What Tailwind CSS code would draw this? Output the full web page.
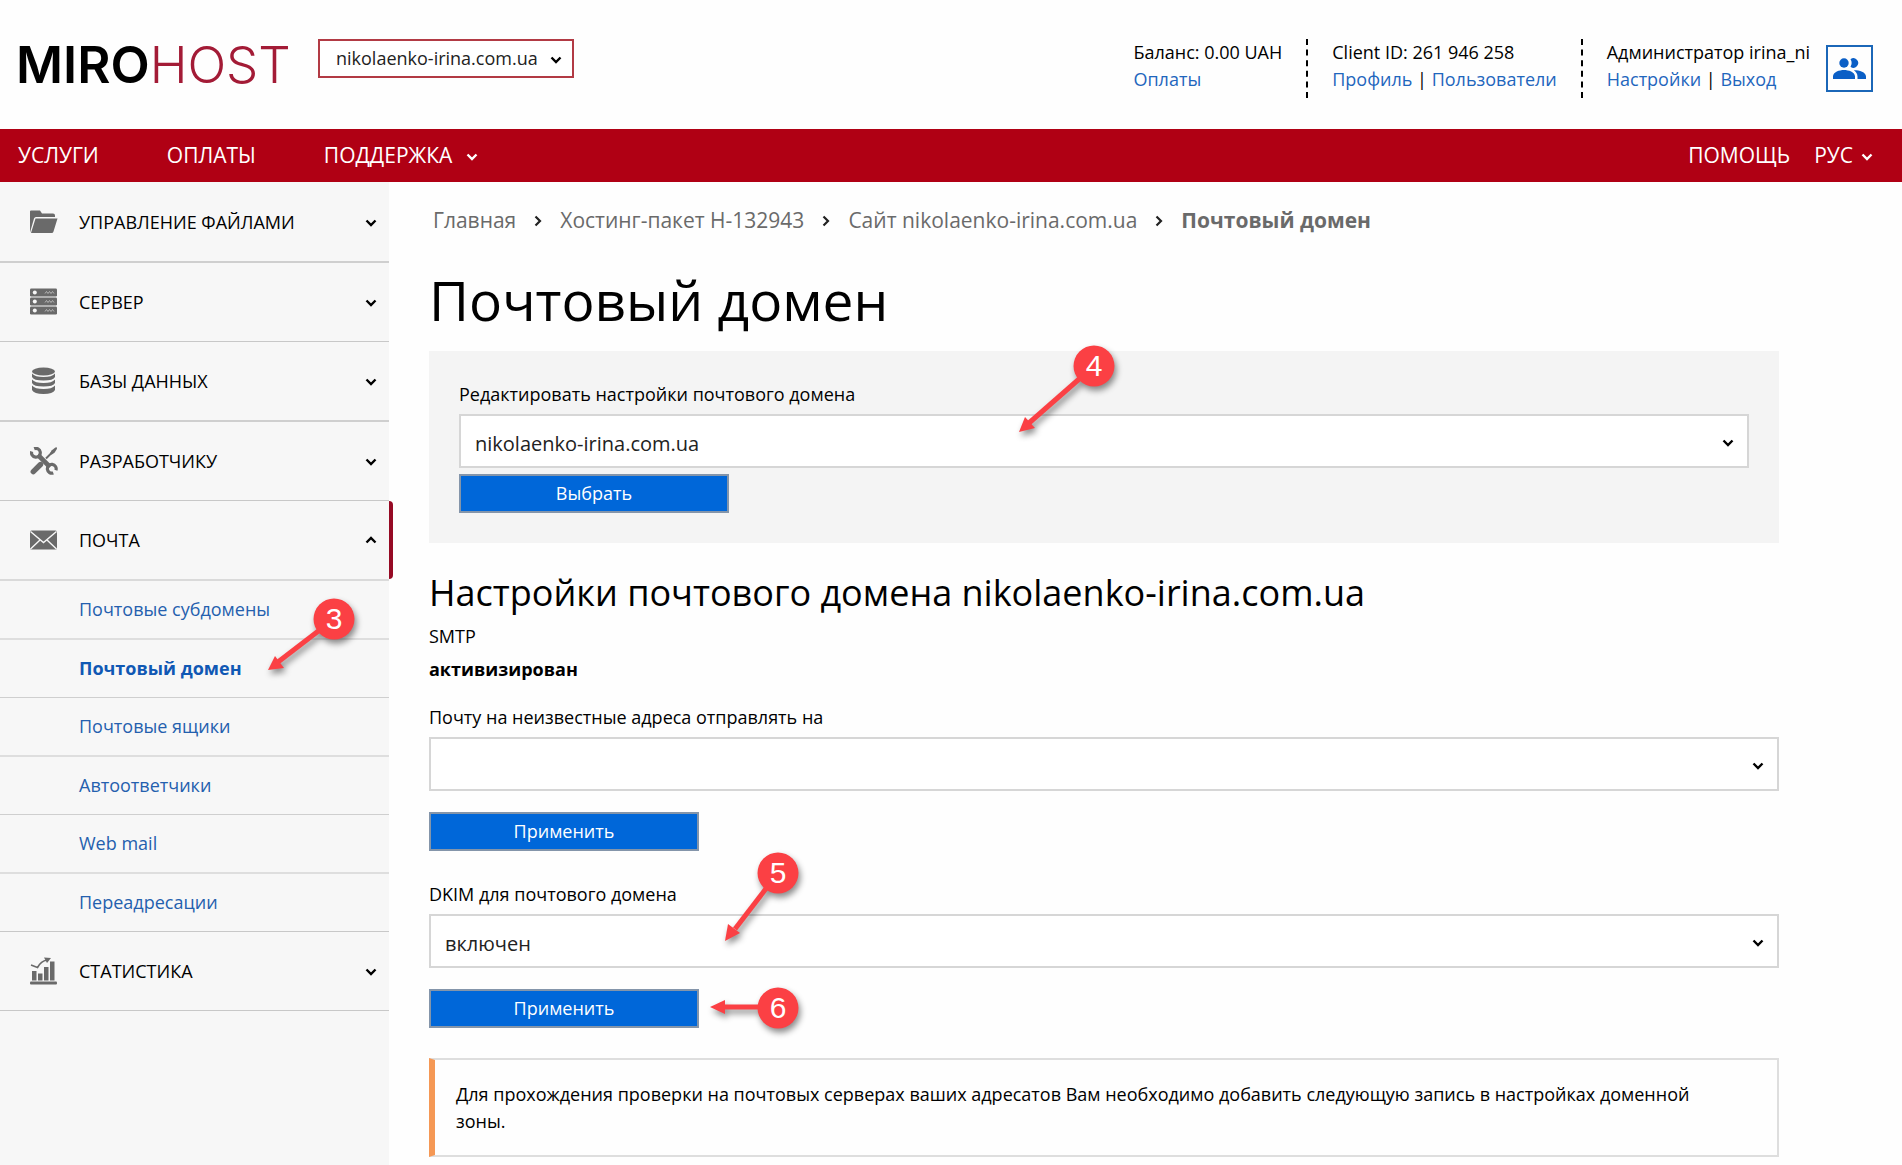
<!DOCTYPE html>
<html lang="ru">
<head>
<meta charset="utf-8">
<meta name="viewport" content="width=device-width, initial-scale=1">
<title>Почтовый домен</title>
<script src="https://cdn.jsdelivr.net/npm/@tailwindcss/browser@4"></script>
</head>
<body class="relative flex min-h-screen flex-col bg-[#fefefe] font-['Open_Sans',sans-serif] text-[18px] leading-[27px] text-black">

<svg class="hidden" aria-hidden="true">
  <symbol id="down" viewBox="0 0 12 8"><path d="M1.5 1.5 6 6l4.5-4.5" fill="none" stroke="currentColor" stroke-width="2.4"/></symbol>
  <symbol id="right" viewBox="0 0 8 12"><path d="M1.5 1.5 6 6l-4.5 4.5" fill="none" stroke="currentColor" stroke-width="2.2"/></symbol>
</svg>

<header class="flex h-[129px] shrink-0 items-start pt-[39px] pr-[29px] pl-4">
  <a href="#" class="w-[302px] shrink-0 font-['Inter',sans-serif] text-[51px] leading-[52px] whitespace-nowrap"><span class="font-semibold">MIRO</span><span class="font-light text-[#a31b36]">HOST</span></a>
  <div class="grid w-[256px]">
    <select aria-label="Сайт" class="col-start-1 row-start-1 h-[39px] w-full appearance-none border-2 border-[#b23a44] bg-white pl-4 text-[#222]"><option>nikolaenko-irina.com.ua</option></select>
    <svg class="pointer-events-none col-start-1 row-start-1 mt-0.5 mr-3 h-2 w-3 self-center justify-self-end"><use href="#down"/></svg>
  </div>
  <div class="ml-auto flex shrink-0">
    <div class="h-[59px] border-r-2 border-dashed border-black pr-6">
      <p>Баланс: 0.00 UAH</p>
      <p><a href="#" class="text-[#1f66bd]">Оплаты</a></p>
    </div>
    <div class="h-[59px] border-r-2 border-dashed border-black px-6">
      <p>Client ID: 261 946 258</p>
      <p><a href="#" class="text-[#1f66bd]">Профиль</a> | <a href="#" class="text-[#1f66bd]">Пользователи</a></p>
    </div>
    <div class="h-[59px] pr-4 pl-6">
      <p>Администратор irina_ni</p>
      <p><a href="#" class="text-[#1f66bd]">Настройки</a> | <a href="#" class="text-[#1f66bd]">Выход</a></p>
    </div>
    <button type="button" aria-label="Пользователи" class="mt-1.5 flex size-[47px] items-center justify-center border-2 border-[#1b67b8]">
      <svg class="w-[33px]" viewBox="0 0 33 22" fill="#0b5fc6"><circle cx="11" cy="5" r="4.7"/><path d="M17.5 1.3a4.7 4.7 0 1 1 0 7.4 7 7 0 0 0 0-7.4zM0 21v-2.500C0 14 6.5 12 11 12s11 2 11 6.500V21zM24.5 21v-2.500c0-2.700-1.500-4.700-3.700-6.200C26 12.200 33 14 33 18.500V21z"/></svg>
    </button>
  </div>
</header>

<nav class="flex h-[53px] shrink-0 items-center bg-[#b00014] pr-[29px] pl-[18px] text-[21px] text-white">
  <a href="#" class="mr-[68px]">УСЛУГИ</a>
  <a href="#" class="mr-[68px]">ОПЛАТЫ</a>
  <a href="#" class="flex items-center gap-3.5">ПОДДЕРЖКА <svg class="mt-0.5 h-2 w-3"><use href="#down"/></svg></a>
  <a href="#" class="ml-auto">ПОМОЩЬ</a>
  <button type="button" class="ml-6 flex items-center gap-2">РУС <svg class="mt-0.5 h-2 w-3"><use href="#down"/></svg></button>
</nav>

<div class="flex grow">
  <aside class="w-[389px] shrink-0 bg-[#f7f7f7]">
    <ul class="pt-px">
      <li class="border-b-2 border-[#cfcfcf]"><button type="button" class="flex h-[78px] w-full items-center pr-3 pl-[30px] text-left">
        <svg class="mr-[21px] size-7 text-[#6a6a6a]" viewBox="0 0 28 28" fill="currentColor"><path d="M0 24.500V3.500Q0 2.500 1 2.500h9l2 3h11q2 0 2 2v1.500H6q-1.500 0-2 1.500z"/><path d="M5.500 10.500H27.500L23.500 23.500q-.3 1.500-2 1.500H1z"/></svg>
        <span class="grow">УПРАВЛЕНИЕ ФАЙЛАМИ</span><svg class="mt-0.5 h-2 w-3"><use href="#down"/></svg></button></li>
      <li class="border-b border-[#c8c8c8]"><button type="button" class="flex h-[78px] w-full items-center pr-3 pl-[30px] text-left">
        <svg class="mr-[21px] size-7 text-[#6a6a6a]" viewBox="0 0 28 28" fill="currentColor"><rect y=".5" width="27" height="8" rx="1.2"/><rect y="9.5" width="27" height="8" rx="1.2"/><rect y="18.5" width="27" height="8" rx="1.2"/><g fill="#f7f7f7"><circle cx="4.8" cy="4.500" r="2"/><circle cx="4.8" cy="13.5" r="2"/><circle cx="4.8" cy="22.5" r="2"/></g><path d="M15 5.500l1.500-2 1.500 2 1.500-2 1.500 2 1.500-2 1.500 2M15 14.500l1.500-2 1.500 2 1.500-2 1.500 2 1.500-2 1.500 2M15 23.500l1.500-2 1.500 2 1.500-2 1.500 2 1.500-2 1.500 2" fill="none" stroke="#c4c4c4" stroke-width=".8"/></svg>
        <span class="grow">СЕРВЕР</span><svg class="mt-0.5 h-2 w-3"><use href="#down"/></svg></button></li>
      <li class="border-b-2 border-[#cfcfcf]"><button type="button" class="flex h-[78px] w-full items-center pr-3 pl-[30px] text-left">
        <svg class="mr-[21px] size-7 text-[#6a6a6a]" viewBox="0 0 28 28" fill="currentColor"><ellipse cx="13.5" cy="4.500" rx="11.5" ry="4"/><path d="M2 6.500q3 3.500 11.500 3.500T25 6.500V10q-1.500 3.500-11.500 3.500T2 10zM2 12.500q3 3.500 11.500 3.500T25 12.500V16q-1.500 3.500-11.500 3.500T2 16zM2 18.500q3 3.500 11.500 3.500T25 18.500v4.500q-2 4-11.500 4T2 23z"/></svg>
        <span class="grow">БАЗЫ ДАННЫХ</span><svg class="mt-0.5 h-2 w-3"><use href="#down"/></svg></button></li>
      <li class="border-b border-[#c8c8c8]"><button type="button" class="flex h-[78px] w-full items-center pr-3 pl-[30px] text-left">
        <svg class="mr-[21px] size-7 text-[#6a6a6a]" viewBox="0 0 28 28" fill="none" stroke="currentColor"><path d="M8 8l12 12" stroke-width="4.6"/><path d="M4.200 1.700A4.400 4.400 0 1 1 1.700 4.400M23.300 25.900A4.400 4.400 0 1 1 25.900 23.300" stroke-width="3.2"/><path d="M16 11.500l7-7" stroke-width="2"/><path d="M26.800.3l.2 1.500-2.500 4-3 2-1.600-1.600 2-3 3.500-2.700z" fill="currentColor" stroke-width="0"/><path d="M10.500 17.500l-7.200 7.200" stroke-width="5.4" stroke-linecap="round"/></svg>
        <span class="grow">РАЗРАБОТЧИКУ</span><svg class="mt-0.5 h-2 w-3"><use href="#down"/></svg></button></li>
      <li class="border-b-2 border-[#dadada]"><button type="button" class="relative flex h-[78px] w-full items-center pr-3 pl-[30px] text-left">
        <svg class="mr-[21px] size-7 text-[#6a6a6a]" viewBox="0 0 28 28"><rect y="4.5" width="27" height="19" rx="1.5" fill="currentColor"/><path d="M.5 5.500 13.500 16.500 26.500 5.500M.5 23l9.500-9M26.500 23 17 14" fill="none" stroke="#f7f7f7" stroke-width="1.4"/></svg>
        <span class="grow">ПОЧТА</span><svg class="h-2 w-3 rotate-180"><use href="#down"/></svg>
        <span class="absolute inset-y-0 -right-1 w-1 rounded-r-sm bg-[#960a24]"></span></button>
      </li>
      <li class="border-b-2 border-[#dedede]"><a href="#" class="flex h-[57px] items-center pl-[79px] text-[#2460ae]">Почтовые субдомены</a></li>
      <li class="border-b border-[#cfcfcf]"><a href="#" class="flex h-[57px] items-center pl-[79px] font-bold text-[#1058b4]">Почтовый домен</a></li>
      <li class="border-b-2 border-[#dedede]"><a href="#" class="flex h-[57px] items-center pl-[79px] text-[#2460ae]">Почтовые ящики</a></li>
      <li class="border-b border-[#cfcfcf]"><a href="#" class="flex h-[57px] items-center pl-[79px] text-[#2460ae]">Автоответчики</a></li>
      <li class="border-b-2 border-[#dedede]"><a href="#" class="flex h-[57px] items-center pl-[79px] text-[#2460ae]">Web mail</a></li>
      <li class="border-b border-[#c8c8c8]"><a href="#" class="flex h-[57px] items-center pl-[79px] text-[#2460ae]">Переадресации</a></li>
      <li class="border-b border-[#c8c8c8]"><button type="button" class="flex h-[78px] w-full items-center pr-3 pl-[30px] text-left">
        <svg class="mr-[21px] size-7 text-[#6a6a6a]" viewBox="0 0 28 28" fill="currentColor"><rect y="24.5" width="27" height="3" rx="1"/><rect x="2" y="14" width="4.5" height="9.5"/><rect x="8" y="16.5" width="4.5" height="7"/><rect x="14" y="10" width="4.5" height="13.5"/><rect x="20" y="4.5" width="4.5" height="19"/><path d="M1 8l6.500 2.500Q11 4 17 3" fill="none" stroke="currentColor" stroke-width="1.6"/><path d="M14 .5 21 1l-4 5z"/></svg>
        <span class="grow">СТАТИСТИКА</span><svg class="mt-0.5 h-2 w-3"><use href="#down"/></svg></button></li>
    </ul>
  </aside>

  <main class="min-w-0 grow pt-[22px] pr-[123px] pl-10">
    <nav aria-label="Навигация" class="flex items-center gap-[18px] pl-1 text-[21px] leading-8 text-[#6a6a6a]">
      <a href="#">Главная</a><svg class="mt-0.5 h-3 w-2 text-[#222]"><use href="#right"/></svg>
      <a href="#">Хостинг-пакет H-132943</a><svg class="mt-0.5 h-3 w-2 text-[#222]"><use href="#right"/></svg>
      <a href="#">Сайт nikolaenko-irina.com.ua</a><svg class="mt-0.5 h-3 w-2 text-[#222]"><use href="#right"/></svg>
      <span class="font-bold">Почтовый домен</span>
    </nav>
    <h1 class="mt-6 text-[55px] leading-[80px]">Почтовый домен</h1>

    <form class="mt-[11px] bg-[#f4f4f4] p-[30px]">
      <label for="domain" class="block">Редактировать настройки почтового домена</label>
      <div class="mt-1.5 grid">
        <select id="domain" class="col-start-1 row-start-1 h-[54px] w-full appearance-none border-2 border-[#d6d6d6] bg-white pt-1 pl-3.5 text-[20px] text-[#222]"><option>nikolaenko-irina.com.ua</option></select>
        <svg class="pointer-events-none col-start-1 row-start-1 mt-1 mr-[15px] h-2 w-3 self-center justify-self-end"><use href="#down"/></svg>
      </div>
      <button type="button" class="mt-1.5 block h-[39px] w-[270px] border-2 border-[#8495aa] bg-[#0067d9] text-white">Выбрать</button>
    </form>

    <h2 class="mt-[23px] text-[36px] leading-[54px]">Настройки почтового домена nikolaenko-irina.com.ua</h2>
    <p class="mt-[3px]">SMTP</p>
    <p class="mt-1.5 font-bold">активизирован</p>

    <form class="mt-[21px]">
      <label for="catchall" class="block">Почту на неизвестные адреса отправлять на</label>
      <div class="mt-1.5 grid">
        <select id="catchall" class="col-start-1 row-start-1 h-[54px] w-full appearance-none border-2 border-[#d6d6d6] bg-white pt-1 pl-3.5 text-[20px] text-[#222]"><option></option></select>
        <svg class="pointer-events-none col-start-1 row-start-1 mt-1 mr-[15px] h-2 w-3 self-center justify-self-end"><use href="#down"/></svg>
      </div>
      <button type="button" class="mt-[21px] block h-[39px] w-[270px] border-2 border-[#8495aa] bg-[#0067d9] text-white">Применить</button>
    </form>

    <form class="mt-[30px]">
      <label for="dkim" class="block">DKIM для почтового домена</label>
      <div class="mt-1.5 grid">
        <select id="dkim" class="col-start-1 row-start-1 h-[54px] w-full appearance-none border-2 border-[#d6d6d6] bg-white pt-1 pl-3.5 text-[20px] text-[#222]"><option>включен</option></select>
        <svg class="pointer-events-none col-start-1 row-start-1 mt-1 mr-[15px] h-2 w-3 self-center justify-self-end"><use href="#down"/></svg>
      </div>
      <button type="button" class="mt-[21px] block h-[39px] w-[270px] border-2 border-[#8495aa] bg-[#0067d9] text-white">Применить</button>
    </form>

    <div class="mt-[30px] border-2 border-l-6 border-[#dedede] border-l-[#f59855] pt-[21px] pr-[60px] pb-5 pl-[21px]">
      <p>Для прохождения проверки на почтовых серверах ваших адресатов Вам необходимо добавить следующую запись в настройках доменной зоны.</p>
    </div>
  </main>
</div>

<!-- Numbered step markers laid over the page -->
<svg class="pointer-events-none absolute inset-0 h-full w-full drop-shadow-[2px_4px_3px_rgba(0,0,0,0.45)]" fill="#fb4044">
  <g stroke="#fb4044" stroke-width="5">
    <path d="M334 619 278 662"/><path d="M1094 366 1029 423"/><path d="M778 873 735 929"/><path d="M778 1007H722"/>
  </g>
  <path d="M268 670l7-14 9 12z"/><path d="M1019 432l6-15 10 11z"/><path d="M725 941l3-17 12 9z"/><path d="M710 1007l15-7v14z"/>
  <circle cx="334" cy="619" r="20.5"/><circle cx="1094" cy="366" r="20.5"/><circle cx="778" cy="873" r="20.5"/><circle cx="778" cy="1008" r="20.5"/>
</svg>
<svg class="pointer-events-none absolute inset-0 h-full w-full font-['Liberation_Sans',sans-serif] text-[30px]" fill="#fff" text-anchor="middle">
  <text x="334" y="629">3</text><text x="1094" y="376">4</text><text x="778" y="883">5</text><text x="778" y="1018">6</text>
</svg>
</body>
</html>
